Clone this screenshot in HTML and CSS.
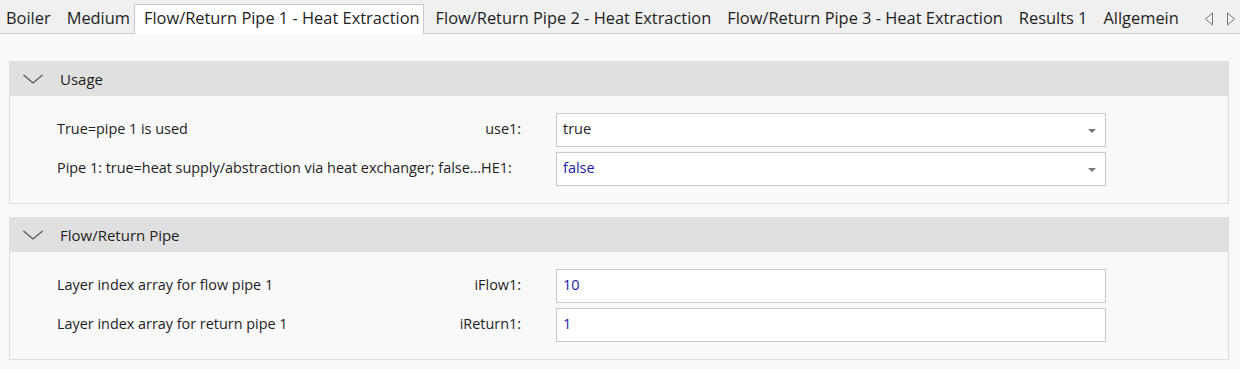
FILE: index.html
```html
<!DOCTYPE html>
<html lang="en">
  <head>
    <meta charset="UTF-8" />
    <meta name="viewport" content="width=device-width, initial-scale=1.0" />
    <title>Flow/Return Pipe 1 - Heat Extraction</title>
    <link rel="stylesheet" href="styles.css">
  </head>
  <body>
    <div id="tabBar">
      <div class="tab">Boiler</div>
      <div class="tab">Medium</div>
      <div class="tab active">Flow/Return Pipe 1 - Heat Extraction</div>
      <div class="tab">Flow/Return Pipe 2 - Heat Extraction</div>
      <div class="tab">Flow/Return Pipe 3 - Heat Extraction</div>
      <div class="tab">Results 1</div>
      <div class="tab">Allgemein</div>
      <div id="tabScroll">
        <svg width="10" height="14" viewBox="0 0 10 14"><path d="M8.5 1 L1.5 7 L8.5 13 Z" fill="none" stroke="#777" stroke-width="1"/></svg>
        <svg width="10" height="14" viewBox="0 0 10 14"><path d="M1.5 1 L8.5 7 L1.5 13 Z" fill="none" stroke="#777" stroke-width="1"/></svg>
      </div>
    </div>

    <div id="content">
      <div class="group">
        <div class="groupHeader">
          <svg class="chevron" width="20" height="10" viewBox="0 0 20 10"><path d="M0.5 1 L10 9 L19.5 1" fill="none" stroke="#555" stroke-width="1.2"/></svg>
          <span>Usage</span>
        </div>
        <div class="groupBody">
          <div class="row">
            <div class="label"><span>True=pipe 1 is used</span><span>use1:</span></div>
            <div class="field select"><span>true</span><span class="caret"></span></div>
          </div>
          <div class="row">
            <div class="label"><span>Pipe 1: true=heat supply/abstraction via heat exchanger; false...HE1:</span></div>
            <div class="field select value"><span>false</span><span class="caret"></span></div>
          </div>
        </div>
      </div>

      <div class="group">
        <div class="groupHeader">
          <svg class="chevron" width="20" height="10" viewBox="0 0 20 10"><path d="M0.5 1 L10 9 L19.5 1" fill="none" stroke="#555" stroke-width="1.2"/></svg>
          <span>Flow/Return Pipe</span>
        </div>
        <div class="groupBody">
          <div class="row">
            <div class="label"><span>Layer index array for flow pipe 1</span><span>iFlow1:</span></div>
            <div class="field value"><span>10</span></div>
          </div>
          <div class="row">
            <div class="label"><span>Layer index array for return pipe 1</span><span>iReturn1:</span></div>
            <div class="field value"><span>1</span></div>
          </div>
        </div>
      </div>
    </div>
  </body>
</html>
```

FILE: styles.css
```css
body {
  margin: 0;
  height: 369px;
  overflow: hidden;
  background-color: #f9f9f9;
  color: #1e1e1e;
  font-family: "Open Sans", "Noto Sans", sans-serif;
}
#tabBar {
  display: flex;
  align-items: flex-end;
  height: 33px;
  background-color: #f0f0f0;
  border-bottom: 1px solid #c9c9c9;
}
.tab {
  font-size: 16.4px;
  height: 28px;
  line-height: 26px;
  padding: 0 8px;
  white-space: nowrap;
}
.tab:first-child {
  padding-left: 6px;
}
.tab.active {
  background-color: #fff;
  border: 1px solid #c9c9c9;
  border-bottom: none;
  margin-bottom: -1px;
  height: 29px;
  padding: 0 3px 0 9px;
  margin-left: -4px;
  margin-right: 4px;
}
#tabScroll {
  margin-left: auto;
  display: flex;
  gap: 12px;
  padding-right: 4px;
  height: 28px;
  align-items: center;
}
#content {
  padding: 27px 11px 0 9px;
}
.group {
  border: 1px solid #dcdcdc;
  border-top: none;
  margin-bottom: 13px;
}
.groupHeader {
  display: flex;
  align-items: center;
  height: 35px;
  background-color: #e0e0e0;
  font-size: 15px;
  margin: 0 -1px;
}
.chevron {
  margin-left: 14px;
  margin-right: 17px;
}
.groupBody {
  display: flex;
  flex-direction: column;
  gap: 5px;
  padding: 17px 0 17px 47px;
}
.row {
  display: flex;
  align-items: center;
  gap: 35px;
}
.label {
  width: 464px;
  display: flex;
  justify-content: space-between;
  font-size: 14.4px;
  white-space: nowrap;
  margin-top: -3px;
}
.field {
  box-sizing: border-box;
  width: 550px;
  height: 34px;
  background-color: #fff;
  border: 1px solid #c8c8c8;
  display: flex;
  align-items: center;
  justify-content: space-between;
  padding: 0 9px 3px 6px;
  font-size: 14.5px;
}
.field.value {
  color: #1c1caa;
}
.caret {
  width: 0;
  height: 0;
  border-left: 4px solid transparent;
  border-right: 4px solid transparent;
  border-top: 4px solid #777;
  margin-top: 4px;
}
```
